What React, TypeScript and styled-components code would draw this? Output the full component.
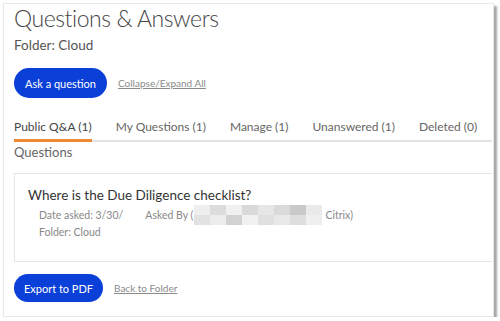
import styled, { createGlobalStyle } from 'styled-components';

const GlobalStyle = createGlobalStyle`
  body {
    margin: 0;
    background: #fff;
    font-family: Lato, "Liberation Sans", sans-serif;
  }
`;

const Frame = styled.div`
  box-sizing: border-box;
  margin: 3px 0 0 3px;
  width: 491px;
  height: 314px;
  border: 1px solid #e8e8e8;
  box-shadow: 3px 3px 2px rgba(0, 0, 0, 0.35);
  padding: 0 0 0 10px;
  background: #fff;
  overflow: hidden;
`;

const Title = styled.h1`
  margin: 0;
  font-size: 23px;
  font-weight: 300;
  letter-spacing: -0.45px;
  line-height: 28px;
  color: #454545;
`;

const SubTitle = styled.div`
  margin-top: 5px;
  font-size: 13.5px;
  line-height: 16px;
  color: #555;
`;

const ActionRow = styled.div<{ top: number }>`
  display: flex;
  align-items: center;
  gap: 11px;
  margin-top: ${p => p.top}px;
`;

const PillButton = styled.button<{ w: number; h: number }>`
  width: ${p => p.w}px;
  height: ${p => p.h}px;
  border: none;
  border-radius: 15px;
  background: #0a3fd8;
  color: #fff;
  font-family: inherit;
  font-size: 11px;
  padding: 0;
`;

const TextLink = styled.a`
  font-size: 10px;
  color: #8a8a8a;
  text-decoration: underline;
`;

const TabBar = styled.div`
  display: flex;
  gap: 24px;
  margin-top: 21px;
  margin-right: 1px;
  border-bottom: 2px solid #e4e4e4;
`;

const Tab = styled.div<{ active?: boolean }>`
  white-space: nowrap;
  font-size: 12px;
  line-height: 15px;
  padding-bottom: 5px;
  color: ${p => (p.active ? '#444' : '#666')};
  border-bottom: 3px solid ${p => (p.active ? '#ee8a34' : 'transparent')};
  margin-bottom: -2px;
`;

const SectionLabel = styled.div`
  margin-top: 2px;
  font-size: 13px;
  line-height: 16px;
  color: #666;
`;

const Card = styled.div`
  margin-top: 13px;
  margin-right: 1px;
  height: 89px;
  box-sizing: border-box;
  border: 1px solid #e6e6e6;
  border-right: none;
  padding: 13px 0 0 13px;
`;

const Question = styled.div`
  font-size: 13.5px;
  line-height: 17px;
  color: #333;
`;

const Meta = styled.div`
  padding-left: 11px;
  margin-top: 1px;
  font-size: 10.5px;
  line-height: 14px;
  color: #888;
`;

const MetaRow = styled.div`
  display: flex;
  align-items: center;
  gap: 22px;
`;

const AskedBy = styled.span`
  display: flex;
  align-items: center;
`;

const Mosaic = styled.span`
  display: grid;
  grid-template-columns: repeat(8, 16px);
  grid-template-rows: 10px 10px;
  margin: 0 3px 0 1px;
`;

const MosaicCell = styled.span<{ shade: string }>`
  background: ${p => p.shade};
`;

const shades = [
  '#eeeeee', '#dcdcdc', '#f0f0f0', '#d9d9d9', '#e6e6e6', '#dadada', '#c9c9c9', '#eaeaea',
  '#e2e2e2', '#ededed', '#d2d2d2', '#f1f1f1', '#e0e0e0', '#e8e8e8', '#dedede', '#efefef',
];

const tabs = ['Public Q&A (1)', 'My Questions (1)', 'Manage (1)', 'Unanswered (1)', 'Deleted (0)'];

export default function App() {
  return (
    <>
      <GlobalStyle />
      <Frame>
        <Title>Questions &amp; Answers</Title>
        <SubTitle>Folder: Cloud</SubTitle>
        <ActionRow top={15}>
          <PillButton w={93} h={30}>Ask a question</PillButton>
          <TextLink>Collapse/Expand All</TextLink>
        </ActionRow>
        <TabBar>
          {tabs.map((t, i) => (
            <Tab key={t} active={i === 0}>{t}</Tab>
          ))}
        </TabBar>
        <SectionLabel>Questions</SectionLabel>
        <Card>
          <Question>Where is the Due Diligence checklist?</Question>
          <Meta>
            <MetaRow>
              <span>Date asked: 3/30/</span>
              <AskedBy>
                Asked By (
                <Mosaic>
                  {shades.map((s, i) => (
                    <MosaicCell key={i} shade={s} />
                  ))}
                </Mosaic>
                Citrix)
              </AskedBy>
            </MetaRow>
            <div>Folder: Cloud</div>
          </Meta>
        </Card>
        <ActionRow top={12}>
          <PillButton w={89} h={28}>Export to PDF</PillButton>
          <TextLink>Back to Folder</TextLink>
        </ActionRow>
      </Frame>
    </>
  );
}
